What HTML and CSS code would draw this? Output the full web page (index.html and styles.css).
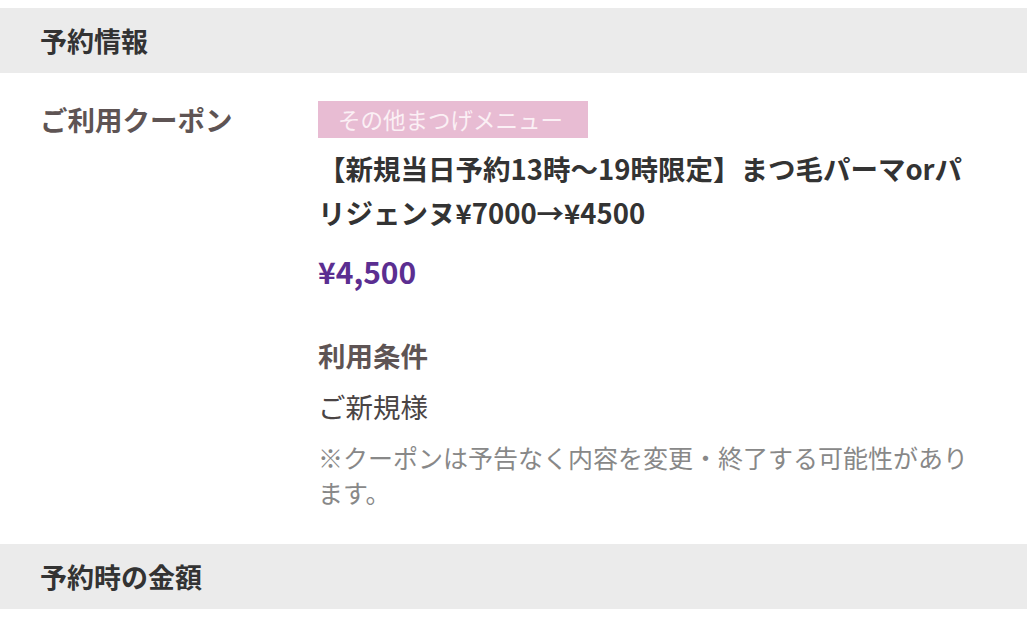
FILE: index.html
```html
<!DOCTYPE html>
<html lang="ja">
<head>
<meta charset="utf-8">
<link rel="stylesheet" href="styles.css">
</head>
<body>
<div class="page">
  <div class="section-head">予約情報</div>
  <div class="row">
    <div class="label">ご利用クーポン</div>
    <div class="content">
      <div class="tag">その他まつげメニュー</div>
      <div class="title">【新規当日予約13時〜19時限定】まつ毛パーマorパリジェンヌ¥7000→¥4500</div>
      <div class="price">¥4,500</div>
      <div class="cond-head">利用条件</div>
      <div class="cond">ご新規様</div>
      <div class="note">※クーポンは予告なく内容を変更・終了する可能性があります。</div>
    </div>
  </div>
  <div class="section-head">予約時の金額</div>
</div>
</body>
</html>
```

FILE: styles.css
```css
html, body {
  margin: 0;
  padding: 0;
  background: #ffffff;
}
body {
  font-family: "Noto Sans CJK JP", "Noto Sans", sans-serif;
  color: #333333;
}
.page {
  padding-top: 8px;
}
.section-head {
  background: #ebebeb;
  height: 65px;
  display: flex;
  align-items: center;
  padding-left: 40px;
  font-size: 27px;
  font-weight: 700;
  color: #333333;
}
.row {
  display: grid;
  grid-template-columns: 278px 1fr;
  padding: 28px 52px 34px 40px;
}
.label {
  font-size: 27.5px;
  font-weight: 700;
  color: #5e5454;
  line-height: 37px;
}
.content {
  display: flex;
  flex-direction: column;
  align-items: flex-start;
}
.tag {
  background: #e8bcd3;
  color: #fbf0f5;
  font-size: 22.5px;
  line-height: 37px;
  height: 37px;
  padding: 0 20px 0 20px;
  width: 230px;
  white-space: nowrap;
}
.title {
  margin-top: 8px;
  font-size: 27.5px;
  font-weight: 700;
  line-height: 44px;
  color: #333333;
}
.price {
  margin-top: 17px;
  font-size: 30px;
  font-weight: 700;
  color: #5b2e91;
  line-height: 40px;
}
.cond-head {
  margin-top: 46px;
  font-size: 27.5px;
  font-weight: 700;
  color: #5e5454;
  line-height: 36px;
}
.cond {
  margin-top: 15px;
  font-size: 27.5px;
  color: #4a4444;
  line-height: 36px;
}
.note {
  margin-top: 16px;
  font-size: 25px;
  color: #888888;
  line-height: 35px;
}
```
